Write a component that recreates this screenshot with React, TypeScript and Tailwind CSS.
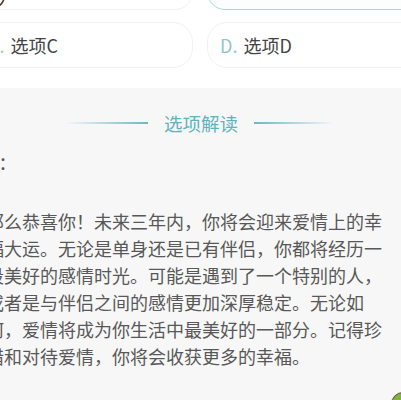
import React from "react";

export default function App() {
  const font = { fontFamily: '"Noto Sans CJK SC", "Noto Sans", sans-serif' };
  return (
    <div className="relative w-[401px] h-[400px] overflow-hidden bg-[#f7f7f7]" style={font}>
      <div className="w-[450px] ml-[-25px]">
        {/* options area */}
        <div className="bg-white pb-[20px]">
          <div className="mt-[-36px] grid grid-cols-2 gap-x-[14px] gap-y-[12px]">
            <div className="relative h-[46px] rounded-[18px] border border-[#f1f1f1] bg-white">
              <svg className="absolute left-[6px] top-[20px]" width="24" height="24" viewBox="0 0 24 24">
                <circle cx="12" cy="12" r="10" fill="none" stroke="#4a3420" strokeWidth="1.6" />
              </svg>
            </div>
            <div className="h-[46px] rounded-[18px] border-[1.5px] border-[#a9d6d8] bg-[#fcfefe]" />
            <div className="flex h-[46px] items-center rounded-[20px] border border-[#f1f1f1] bg-white pl-[12px]">
              <span className="text-[18px] text-[#9fcccc]">C.</span>
              <span className="ml-[6px] text-[18px] text-[#444]">选项C</span>
            </div>
            <div className="flex h-[46px] items-center rounded-[20px] border border-[#f1f1f1] bg-white pl-[12px]">
              <span className="text-[18px] text-[#8ec8c8]">D.</span>
              <span className="ml-[6px] text-[18px] text-[#444]">选项D</span>
            </div>
          </div>
        </div>

        {/* analysis */}
        <div className="bg-[#f7f7f7] pt-[22px]">
          <div className="flex items-center justify-center gap-[16px]">
            <div className="h-[1.5px] w-[83px] bg-gradient-to-r from-transparent to-[#6db7c1]" />
            <span className="text-[18.5px] leading-[26px] text-[#5eb3bf]">选项解读</span>
            <div className="h-[1.5px] w-[81px] bg-gradient-to-l from-transparent to-[#6db7c1]" />
          </div>
          <div className="mt-[13px] pl-[11px] text-[18px] leading-[27px] text-[#555]">D：</div>
          <p className="mt-[32px] w-[412px] pl-[11px] text-[18px] leading-[27px] text-[#585858]">
            那么恭喜你！未来三年内，你将会迎来爱情上的幸福大运。无论是单身还是已有伴侣，你都将经历一段美好的感情时光。可能是遇到了一个特别的人，或者是与伴侣之间的感情更加深厚稳定。无论如何，爱情将成为你生活中最美好的一部分。记得珍惜和对待爱情，你将会收获更多的幸福。
          </p>
        </div>
      </div>
      <div className="absolute left-[391px] top-[392px] h-[24px] w-[24px] rounded-full border-[1.5px] border-[#6b4a2a] bg-[#7cb342]" />
    </div>
  );
}
